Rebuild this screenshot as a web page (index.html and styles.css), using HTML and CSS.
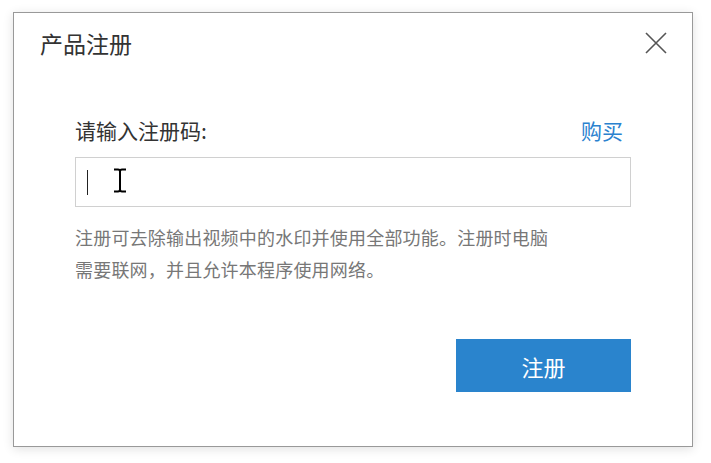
FILE: index.html
```html
<!DOCTYPE html>
<html lang="zh-CN">
<head>
    <meta charset="UTF-8">
    <meta name="viewport" content="width=device-width, initial-scale=1.0">
    <title>产品注册</title>
    <link rel="stylesheet" href="styles.css">
</head>
<body>

    <div class="dialog">
        <!-- Title bar -->
        <div class="dialog-header">
            <h1 class="dialog-title">产品注册</h1>
            <button class="close-btn" aria-label="关闭">
                <svg width="22" height="22" viewBox="0 0 22 22">
                    <path d="M1 1 L21 21 M21 1 L1 21" stroke="#555" stroke-width="1.6" fill="none"/>
                </svg>
            </button>
        </div>

        <!-- Form -->
        <div class="dialog-body">
            <div class="label-row">
                <label for="reg-code" class="field-label">请输入注册码:</label>
                <a href="#" class="buy-link">购买</a>
            </div>
            <div class="input-box">
                <span class="caret"></span>
                <svg class="ibeam" width="14" height="25" viewBox="0 0 14 25">
                    <path d="M1 1.5 H5 Q7 1.5 7 3.5 V21.5 Q7 23.5 5 23.5 H1 M13 1.5 H9 Q7 1.5 7 3.5 M7 21.5 Q7 23.5 9 23.5 H13" stroke="#000" stroke-width="2" fill="none"/>
                </svg>
            </div>
            <p class="note">注册可去除输出视频中的水印并使用全部功能。注册时电脑需要联网，并且允许本程序使用网络。</p>
            <div class="actions">
                <button class="submit-btn">注册</button>
            </div>
        </div>
    </div>

</body>
</html>
```

FILE: styles.css
```css
/* Basic Reset */
* {
    margin: 0;
    padding: 0;
    box-sizing: border-box;
}

body {
    font-family: "Noto Sans CJK SC", "Noto Sans", sans-serif;
    background-color: #fff;
    color: #333;
    padding: 12px 13px;
}

/* Dialog */
.dialog {
    width: 680px;
    height: 435px;
    background-color: #fff;
    border: 1px solid #999;
    box-shadow: 0 2px 10px rgba(0, 0, 0, 0.12);
}

.dialog-header {
    display: flex;
    justify-content: space-between;
    align-items: center;
    padding: 15px 25px 0 26px;
}

.dialog-title {
    font-size: 23px;
    font-weight: normal;
    line-height: 30px;
    color: #333;
}

.close-btn {
    background: none;
    border: none;
    width: 22px;
    height: 22px;
    display: flex;
    cursor: pointer;
}

/* Body */
.dialog-body {
    padding: 58px 61px 0 61px;
}

.label-row {
    display: flex;
    justify-content: space-between;
    align-items: center;
    height: 28px;
}

.field-label {
    font-size: 21px;
    color: #333;
}

.buy-link {
    font-size: 21px;
    color: #2a82cf;
    text-decoration: none;
    margin-right: 8px;
}

.input-box {
    position: relative;
    margin-top: 13px;
    height: 50px;
    border: 1px solid #d0d0d0;
}

.caret {
    position: absolute;
    left: 11px;
    top: 12px;
    width: 1px;
    height: 25px;
    background-color: #222;
}

.ibeam {
    position: absolute;
    left: 37px;
    top: 10px;
}

.note {
    margin-top: 14px;
    max-width: 480px;
    font-size: 18px;
    letter-spacing: 0.2px;
    line-height: 32px;
    color: #777;
}

.actions {
    display: flex;
    justify-content: flex-end;
    margin-top: 54px;
}

.submit-btn {
    width: 175px;
    height: 53px;
    background-color: #2a84cd;
    color: #fff;
    border: none;
    font-family: inherit;
    font-size: 22px;
    cursor: pointer;
}
```
